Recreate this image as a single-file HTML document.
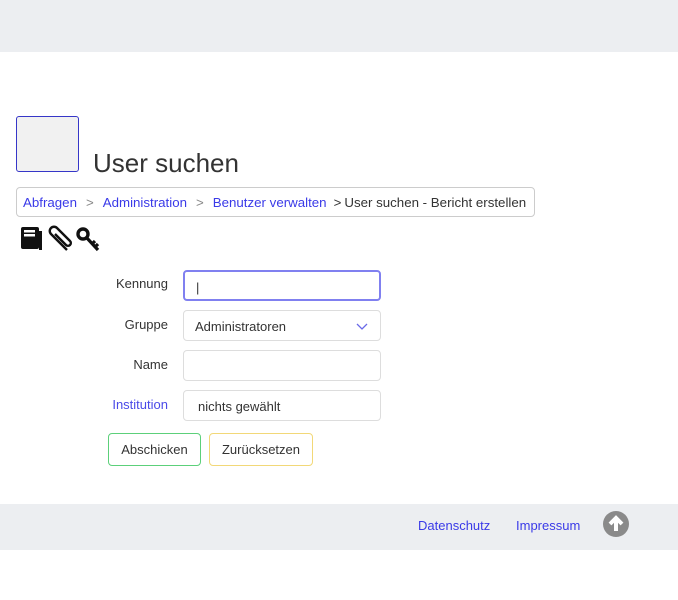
<!DOCTYPE html>
<html><head><style>
body{margin:0;width:678px;height:600px;background:#fff;font-family:"Liberation Sans","DejaVu Sans",sans-serif;position:relative;overflow:hidden;color:#333}
.a{position:absolute}
.top{left:0;top:0;width:678px;height:52px;background:#eceef1}
.logo{left:16px;top:116px;width:61px;height:54px;background:#f1f1f1;border:1px solid #3636c8;border-radius:3px}
h1{position:absolute;left:93px;top:148px;margin:0;font-weight:normal;font-size:26px;color:#333}
.bc{left:16px;top:187px;width:519px;border:1px solid #ccc;border-radius:4px;font-size:13.3px;line-height:29px;white-space:nowrap;padding-left:6px;box-sizing:border-box;height:30px}
.bc a{color:#3a3ae8;text-decoration:none}
.bc .s{color:#888;margin:0 9px}
.lbl{font-size:13px;text-align:right;width:100px;left:68px}
.in{left:183px;width:198px;height:31px;border:1px solid #ddd;border-radius:4px;font-size:13px;line-height:31px;box-sizing:border-box;padding-left:11px}
.btn{height:33px;border-radius:4px;font-size:13px;line-height:31px;text-align:center;box-sizing:border-box;top:433px}
.foot{left:0;top:504px;width:678px;height:46px;background:#eceef1}
.foot span{position:absolute;top:14px;font-size:13px;color:#3a3ae8}
</style></head><body>
<div class="a top"></div>
<div class="a logo"></div>
<h1>User suchen</h1>
<div class="a bc"><a>Abfragen</a><span class="s">&gt;</span><a>Administration</a><span class="s">&gt;</span><a>Benutzer verwalten</a><span style="color:#333;margin:0 3px 0 7px">&gt;</span>User suchen - Bericht erstellen</div>
<svg class="a" style="left:19px;top:224px" width="82" height="30" viewBox="0 0 82 30">
<rect x="2" y="3" width="18" height="22" rx="2" fill="#111"/><rect x="5" y="6" width="11" height="2.5" fill="#fff"/><rect x="5" y="10" width="11" height="2.5" fill="#fff"/><rect x="20" y="7" width="3" height="19" fill="#111"/>
<path d="M48 26 L32 10 a4 4 0 0 1 6-6 L51 17 a2.5 2.5 0 0 1-4 4 L36 10" fill="none" stroke="#111" stroke-width="2.4"/>
<circle cx="64" cy="10" r="5" fill="none" stroke="#111" stroke-width="3.4"/><path d="M67 13 L79 26 M73 20 L76 17 M76 23 L79 20" stroke="#111" stroke-width="3.2"/>
</svg>
<div class="a lbl" style="top:276px">Kennung</div>
<div class="a in" style="top:270px;border:2px solid #8080f0;height:31px">|</div>
<div class="a lbl" style="top:317px">Gruppe</div>
<div class="a in" style="top:310px">Administratoren<svg style="position:absolute;right:12px;top:12px" width="12" height="8"><path d="M1 1 L6 6 L11 1" fill="none" stroke="#6a6ae8" stroke-width="1.3"/></svg></div>
<div class="a lbl" style="top:357px">Name</div>
<div class="a in" style="top:350px"></div>
<div class="a lbl" style="top:397px;color:#4a4ae8">Institution</div>
<div class="a in" style="top:390px;padding-left:14px">nichts gewählt</div>
<div class="a btn" style="left:108px;width:93px;border:1.5px solid #5cd07a">Abschicken</div>
<div class="a btn" style="left:209px;width:104px;border:1.5px solid #f2d878">Zurücksetzen</div>
<div class="a foot"><span style="left:418px">Datenschutz</span><span style="left:516px">Impressum</span>
<svg style="position:absolute;left:603px;top:7px" width="26" height="26"><circle cx="13" cy="13" r="13" fill="#8a8a8a"/><path d="M13 20 V8 M7 13 L13 7 L19 13" stroke="#fff" stroke-width="4" fill="none"/></svg></div>
</body></html>
